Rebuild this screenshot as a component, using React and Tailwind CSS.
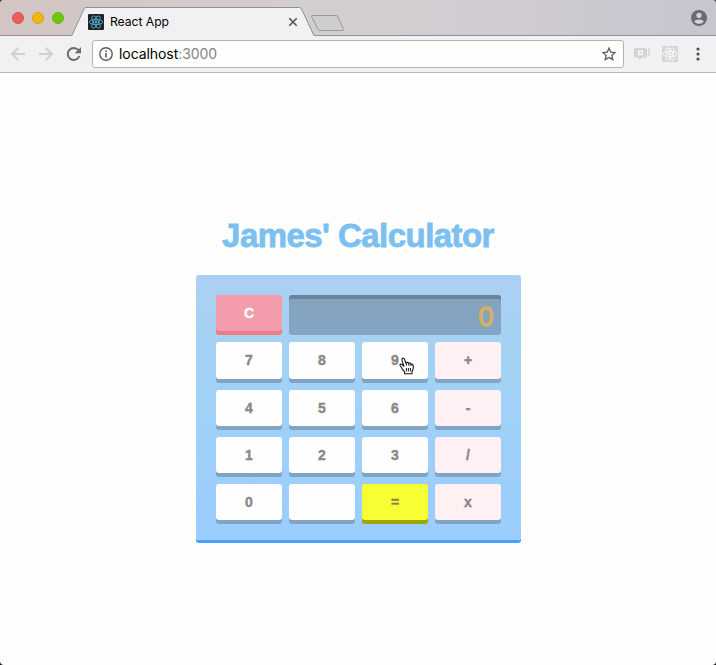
import React from "react";

function ReactLogo({ className, box, ink, width = 1.1 }) {
  return (
    <svg viewBox="0 0 16 16" className={className}>
      <rect width="16" height="16" rx="1" fill={box} />
      <g fill="none" stroke={ink} strokeWidth={width}>
        <ellipse cx="8" cy="8" rx="6.8" ry="2.6" />
        <ellipse cx="8" cy="8" rx="6.8" ry="2.6" transform="rotate(60 8 8)" />
        <ellipse cx="8" cy="8" rx="6.8" ry="2.6" transform="rotate(120 8 8)" />
      </g>
      <circle cx="8" cy="8" r="1.4" fill={ink} />
    </svg>
  );
}

function TabStrip() {
  return (
    <div className="relative flex h-9 bg-linear-to-r from-[#d2c5c3] via-[#d3cfd1] to-[#c9c5d0]">
      <div className="flex w-[72px] gap-2 border-b border-[#918f93] pl-3 pt-3">
        <span className="size-3 rounded-full border border-[#d9524a] bg-[#e8605a]" />
        <span className="size-3 rounded-full border border-[#dda20e] bg-[#eeb80f]" />
        <span className="size-3 rounded-full border border-[#62bb0c] bg-[#6fc60a]" />
      </div>
      <div className="relative flex w-[242px] items-center pl-4 pt-[7px]">
        <svg viewBox="0 0 242 36" className="absolute left-0 top-0 h-9 w-[242px]">
          <path d="M0 36V35.5L12 8.8Q12.6 7.5 14 7.5H227Q228.8 7.5 229.5 9L241.5 35.5V36Z" fill="#f1f1f4" />
          <path d="M0 35.5L12 8.8Q12.6 7.5 14 7.5H227Q228.8 7.5 229.5 9L242 35.5" fill="none" stroke="#918f93" />
        </svg>
        <ReactLogo className="relative size-4" box="#222326" ink="#4fa8c8" width={0.9} />
        <span className="relative ml-1.5 w-[178px] whitespace-nowrap text-[12.2px] leading-4 tracking-[-0.05px] text-black">React App</span>
        <svg viewBox="0 0 10 10" className="relative size-[10px]">
          <path d="M1.3 1.3l7.4 7.4M8.7 1.3L1.3 8.7" stroke="#555" strokeWidth="1.6" />
        </svg>
      </div>
      <div className="flex flex-1 justify-between border-b border-[#918f93] pr-[9px]">
        <svg viewBox="0 0 36 36" className="-ml-[4px] size-9">
          <path d="M2.5 15.5H26Q27.3 15.5 28 17L33.3 29Q34 30.5 32.5 30.5H10Q8.5 30.5 7.8 29L1.8 17Q1 15.5 2.5 15.5Z" fill="#cecdd0" stroke="#99979b" />
        </svg>
        <svg viewBox="0 0 16 16" className="mt-[10px] size-4">
          <circle cx="8" cy="8" r="8" fill="#6b6a6d" />
          <circle cx="8" cy="5.3" r="2.6" fill="#d4d1d8" />
          <path d="M3 11.6Q4.5 9.4 8 9.4T13 11.6Q11 14 8 14T3 11.6Z" fill="#d4d1d8" />
        </svg>
      </div>
      <svg viewBox="0 0 3 3" className="absolute left-0 top-0 size-[3px]">
        <path d="M0 0H3Q0 0 0 3Z" fill="#4b0d10" />
      </svg>
      <svg viewBox="0 0 3 3" className="absolute right-0 top-0 size-[3px]">
        <path d="M3 0H0Q3 0 3 3Z" fill="#26233a" />
      </svg>
    </div>
  );
}

function Toolbar() {
  return (
    <div className="flex h-[37px] items-start border-b border-[#b5b5b8] bg-[#f1f1f4] pl-[10px] pt-1">
      <svg viewBox="0 0 16 16" className="mt-1.5 size-4" fill="none" stroke="#d0d0d2" strokeWidth="1.8">
        <path d="M15 8H2.5M8.5 1.6L2.1 8l6.4 6.4" />
      </svg>
      <svg viewBox="0 0 16 16" className="ml-3 mt-1.5 size-4" fill="none" stroke="#d0d0d2" strokeWidth="1.8">
        <path d="M1 8h12.5M7.5 1.6L13.9 8l-6.4 6.4" />
      </svg>
      <svg viewBox="0 0 16 16" className="ml-3 mt-1.5 size-4">
        <path d="M13.4 10A6 6 0 1 1 12.4 4.1" fill="none" stroke="#6b6b6d" strokeWidth="2" />
        <path d="M15 .9V7.2H8.7Z" fill="#6b6b6d" />
      </svg>
      <div className="ml-[10px] flex h-7 w-[532px] items-center rounded-[3px] border border-[#b3b3b8] bg-[#fefefd] pl-1.5 pr-[7px]">
        <svg viewBox="0 0 14 14" className="size-[14px]">
          <circle cx="7" cy="7" r="6.2" fill="none" stroke="#5b5b5d" strokeWidth="1.4" />
          <path d="M6.2 6.1h1.6v4.5H6.2zM6.2 3.4h1.6V5H6.2z" fill="#5b5b5d" />
        </svg>
        <span className="ml-1.5 flex-1 whitespace-nowrap text-[14px] leading-5 tracking-[-0.07px] text-black">
          localhost<span className="text-[#85858a]">:3000</span>
        </span>
        <svg viewBox="0 0 14 14" className="size-[14px]">
          <path d="M7 1.1l1.7 4 4.4.4-3.3 2.9 1 4.2L7 10.4l-3.8 2.2 1-4.2L.9 5.5l4.4-.4z" fill="none" stroke="#5b5b5d" strokeWidth="1.3" />
        </svg>
      </div>
      <svg viewBox="0 0 16 16" className="ml-[10px] mt-1.5 size-4">
        <path d="M1.5 2H11.5Q13 2 13 3.5V10Q13 11.5 11.5 11.5H8L5 14V11.5H1.5Q0 11.5 0 10V3.5Q0 2 1.5 2Z" fill="#d4d4d6" />
        <path d="M15 2.5V10" stroke="#d4d4d6" strokeWidth="1.5" />
        <rect x="4.7" y="5" width="3.6" height="3.6" fill="none" stroke="#fff" strokeWidth="1.2" />
      </svg>
      <ReactLogo className="ml-3 mt-1.5 size-4" box="#d5d5d5" ink="#f5f5f5" />
      <svg viewBox="0 0 4 14" className="ml-[18px] mt-[7px] h-[14px] w-1" fill="#505052">
        <circle cx="2" cy="2" r="1.6" />
        <circle cx="2" cy="7" r="1.6" />
        <circle cx="2" cy="12" r="1.6" />
      </svg>
    </div>
  );
}

const tones = {
  digit: "bg-[#fefefe] text-[#888888] shadow-[0_4px_#81a4c3]",
  operator: "bg-[#fff0f3] text-[#888888] shadow-[0_4px_#81a4c3]",
  equals: "bg-[#f6ff33] text-[#888845] shadow-[0_4px_#9da700]",
  clear: "bg-[#f39dac] text-[#fefefe] shadow-[0_4px_#ef7b82]",
};

function Key({ label, tone = "digit" }) {
  return (
    <button className={`block h-[36.2px] w-[66px] cursor-pointer rounded-[3px] text-center text-[14px] font-bold leading-9 [-webkit-text-stroke:0.4px] ${tones[tone]}`}>
      {label}
    </button>
  );
}

const rows = [
  ["7", "8", "9", "+"],
  ["4", "5", "6", "-"],
  ["1", "2", "3", "/"],
  ["0", "", "=", "x"],
];

function toneOf(label) {
  if (label === "=") return "equals";
  return "+-/x".includes(label) && label ? "operator" : "digit";
}

function Cursor() {
  return (
    <svg viewBox="0 0 16 18" className="absolute left-[37px] top-[15px] h-[18px] w-4">
      <path
        d="M5.6 16.8V14.8L3.2 11.8 1.1 8.5Q.6 7.3 1.8 7 2.8 6.9 4.4 8.8L5 9.2 3 3.4Q2.5 1.6 3.7 1.2 5 1 5.6 2.5L7 6.2Q7.3 5.2 8.4 5.4 9.4 5.6 9.6 6.6 10 5.8 11 6.1 11.8 6.4 12 7.4 12.6 6.8 13.4 7.3 14.3 7.9 14.4 9.8 14.5 11.6 13.6 13.3L13 14.8V16.8Z"
        fill="#fff"
        stroke="#151515"
        strokeWidth="1.1"
        strokeLinejoin="round"
      />
      <path d="M7.2 6.2L7.7 8.6M9.7 6.6L10 8.8M12 7.4V9M7.4 11V14.4M9.4 11V14.4M11.4 11V14.4" stroke="#151515" />
    </svg>
  );
}

function Calculator() {
  return (
    <div className="h-[265px] w-[325px] rounded-[3px] bg-linear-to-b from-[#abd0f4] via-[#a3d2f3] via-30% to-[#9acdff] px-5 pt-5 shadow-[0_3px_#46a1fb]">
      <div className="flex h-10 gap-[7px]">
        <Key label="C" tone="clear" />
        <div className="h-10 flex-1 rounded-[3px] bg-linear-to-b from-[#86a3ba] to-[#82a5c5] pr-[7.5px] pt-[4px] text-right text-[27px] leading-[37px] text-[#d4b063] shadow-[inset_0_4px_#69859c]">
          <span className="[-webkit-text-stroke:1.4px_#d4b063]">0</span>
        </div>
      </div>
      <div className="mt-[7.4px] flex flex-col gap-[11px]">
        {rows.map((row) => (
          <div key={row.join()} className="flex gap-[7px]">
            {row.map((label, i) => (
              <div key={i} className="relative h-[36.2px]">
                <Key label={label} tone={toneOf(label)} />
                {label === "9" && <Cursor />}
              </div>
            ))}
          </div>
        ))}
      </div>
    </div>
  );
}

export default function App() {
  return (
    <div className="relative flex h-[665px] w-[716px] flex-col overflow-hidden bg-[#fefefd] font-[Inter,Roboto,sans-serif]">
      <TabStrip />
      <Toolbar />
      <main className="flex flex-1 flex-col items-center pl-px pt-[143px] font-['Liberation_Sans',Arial,sans-serif]">
        <h1 className="mb-[19px] mr-px h-10 whitespace-nowrap text-[33px] font-bold leading-10 tracking-[-0.55px] text-[#7bc0f0] [-webkit-text-stroke:0.8px]">James' Calculator</h1>
        <Calculator />
      </main>
      <svg viewBox="0 0 4 4" className="absolute bottom-0 left-0 size-1">
        <path d="M0 0Q0 4 4 4H0Z" fill="#111" />
      </svg>
      <svg viewBox="0 0 4 4" className="absolute bottom-0 right-0 size-1">
        <path d="M4 0Q4 4 0 4H4Z" fill="#111" />
      </svg>
    </div>
  );
}
